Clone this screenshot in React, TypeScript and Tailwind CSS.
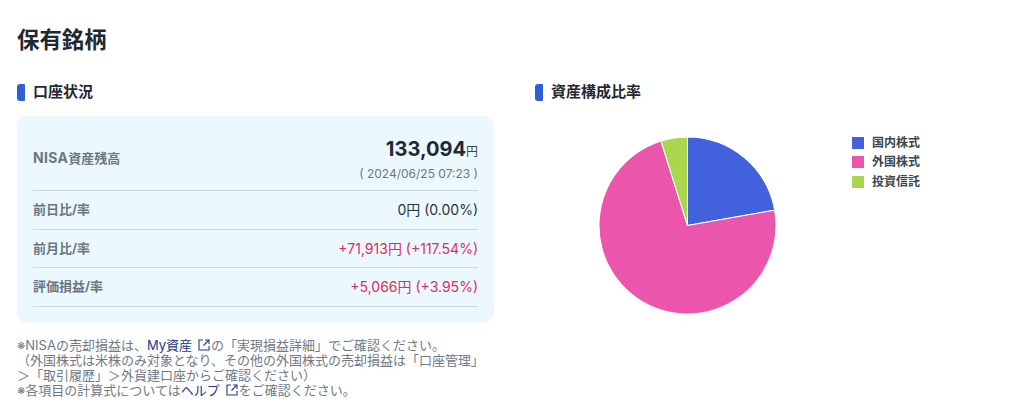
import React from "react";

const font = { fontFamily: '"Inter", "Noto Sans CJK JP", sans-serif' };

const cx = 88;
const cy = 88;
const r = 88;

// start/end are degrees clockwise from 12 o'clock
const slice = (start: number, end: number) => {
  const p = (deg: number) => {
    const a = (deg * Math.PI) / 180;
    return `${cx + r * Math.sin(a)} ${cy - r * Math.cos(a)}`;
  };
  const large = end - start > 180 ? 1 : 0;
  return `M${cx} ${cy} L${p(start)} A${r} ${r} 0 ${large} 1 ${p(end)} Z`;
};

const slices = [
  { label: "国内株式", color: "#4161dd", start: 0, end: 80 },
  { label: "外国株式", color: "#eb56ad", start: 80, end: 342.6 },
  { label: "投資信託", color: "#aad74e", start: 342.6, end: 360 },
];

const rows = [
  { label: "前日比/率", value: "0円 (0.00%)", up: false },
  { label: "前月比/率", value: "+71,913円 (+117.54%)", up: true },
  { label: "評価損益/率", value: "+5,066円 (+3.95%)", up: true },
];

const SectionTitle = ({ title }: { title: string }) => (
  <div className="flex items-center gap-[8px] h-[18px]">
    <span className="w-[8px] h-[17px] bg-[#2f5fd8] rounded-l-[3px] rounded-r-[1px]" />
    <h2 className="text-[15px] leading-[18px] font-bold text-[#1f2933]">{title}</h2>
  </div>
);

const ExternalIcon = () => (
  <svg
    viewBox="0 0 12 12"
    className="inline-block w-[12px] h-[12px] ml-[6px] mr-[1px] align-[-1px]"
    fill="none"
    stroke="#23388f"
    strokeWidth="1.1"
  >
    <path d="M5 1 H1 V11 H11 V7" />
    <path d="M7 1 H11 V5" />
    <path d="M11 1 L5.5 6.5" />
  </svg>
);

export default function App() {
  return (
    <div className="w-[1024px] h-[415px] bg-white overflow-hidden px-[17px] pt-[25px]" style={font}>
      <h1 className="text-[22.4px] leading-[30px] font-bold text-[#1f2933]">保有銘柄</h1>
      <div className="flex mt-[28px]">
        <div className="w-[477px]">
          <SectionTitle title="口座状況" />
          <div className="mt-[15px] h-[207px] bg-[#ebf8fe] rounded-[10px] px-[16px] pt-[12px]">
            <div className="h-[63px] flex items-center justify-between border-b border-[#ccd8df]">
              <span className="text-[13px] font-bold text-[#6b7780] mb-[2px]">
                <span className="text-[14px] tracking-[0.3px]">NISA</span>資産残高
              </span>
              <div className="text-right mb-[1px]">
                <div className="leading-[28px] font-bold text-[20px] text-[#1f2933]">
                  133,094<span className="text-[12px] font-normal text-[#3c4650]">円</span>
                </div>
                <div className="text-[12px] leading-[16px] text-[#6b7780]">( 2024/06/25 07:23 )</div>
              </div>
            </div>
            {rows.map((row) => (
              <div
                key={row.label}
                className="h-[38.6px] flex items-center justify-between border-b border-[#ccd8df]"
              >
                <span className="text-[13px] font-bold text-[#6b7780]">{row.label}</span>
                <span className={row.up ? "text-[14px] text-[#e22c5c]" : "text-[14px] text-[#2a333c]"}>
                  {row.value}
                </span>
              </div>
            ))}
          </div>
          <div className="mt-[15px] w-[490px] text-[13px] leading-[15px] text-[#6f7a84]">
            <p>
              ※NISAの売却損益は、<span className="text-[#23388f]">My資産</span>
              <ExternalIcon />
              の「実現損益詳細」でご確認ください。
            </p>
            <p>（外国株式は米株のみ対象となり、その他の外国株式の売却損益は「口座管理」</p>
            <p>＞「取引履歴」＞外貨建口座からご確認ください）</p>
            <p>
              ※各項目の計算式については<span className="text-[#23388f]">ヘルプ</span>
              <ExternalIcon />
              をご確認ください。
            </p>
          </div>
        </div>
        <div className="ml-[41px] flex-1">
          <SectionTitle title="資産構成比率" />
          <div className="flex mt-[27px]">
            <svg viewBox="0 0 176 176" className="ml-[64px] mt-[9px] w-[177px] h-[177px] shrink-0">
              {slices.map((s) => (
                <path
                  key={s.label}
                  d={slice(s.start, s.end)}
                  fill={s.color}
                  stroke="#ffffff"
                  strokeWidth="1"
                  strokeLinejoin="round"
                />
              ))}
            </svg>
            <ul className="ml-[76px] mt-[5px] flex flex-col">
              {slices.map((s) => (
                <li key={s.label} className="flex items-center h-[19.5px] gap-[8px]">
                  <span className="w-[12px] h-[12px]" style={{ backgroundColor: s.color }} />
                  <span className="text-[12px] font-bold text-[#3c4650]">{s.label}</span>
                </li>
              ))}
            </ul>
          </div>
        </div>
      </div>
    </div>
  );
}
